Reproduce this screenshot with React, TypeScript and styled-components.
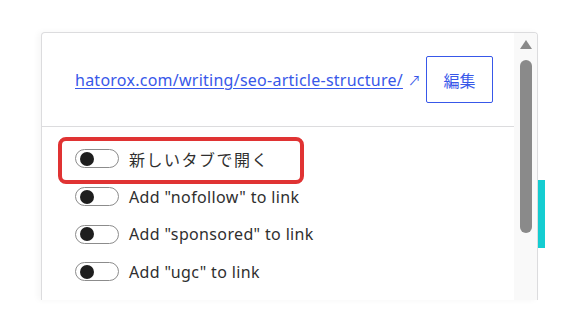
import React from "react";
import styled, { createGlobalStyle } from "styled-components";

const Global = createGlobalStyle`
  html, body { margin: 0; padding: 0; background: #ffffff; }
  body { font-family: "Noto Sans", "Noto Sans CJK JP", sans-serif; }
`;

const Stage = styled.div`
  width: 576px;
  height: 332px;
  box-sizing: border-box;
  padding: 32px 0 0 41px;
  display: flex;
  align-items: flex-start;
`;

const Panel = styled.div`
  position: relative;
  width: 497px;
  height: 268px;
  box-sizing: border-box;
  border: 1px solid #dcdcde;
  border-bottom: none;
  border-radius: 4px 4px 0 0;
  background: #fff;
  box-shadow: -3px 0 6px rgba(0, 0, 0, 0.04);
  display: flex;
  overflow: hidden;
`;

const Content = styled.div`
  flex: 1;
  display: flex;
  flex-direction: column;
`;

const LinkRow = styled.div`
  display: flex;
  align-items: center;
  padding: 23px 0 23px 33px;
  border-bottom: 1px solid #dcdcde;
`;

const LinkText = styled.a`
  font-size: 16px;
  color: #3858e9;
  text-decoration: underline;
  text-underline-offset: 2px;
  text-decoration-thickness: 1px;
  letter-spacing: 0.25px;
`;

const Arrow = styled.span`
  font-size: 13px;
  color: #3858e9;
  margin-left: 5px;
`;

const EditButton = styled.button`
  margin-left: 5px;
  width: 67px;
  height: 47px;
  box-sizing: border-box;
  border: 1px solid #3858e9;
  border-radius: 2px;
  background: #fff;
  color: #3858e9;
  font-family: "Noto Sans CJK JP", sans-serif;
  font-size: 16px;
  padding: 0;
`;

const ToggleList = styled.div`
  display: flex;
  flex-direction: column;
  padding: 13px 0 0 33px;
`;

const ToggleRow = styled.div`
  display: flex;
  align-items: center;
  height: 37.7px;
  gap: 10px;
`;

const Track = styled.span`
  width: 44px;
  height: 19px;
  box-sizing: border-box;
  border: 1px solid #8c8c8c;
  border-radius: 10px;
  display: flex;
  align-items: center;
  padding-left: 4px;
`;

const Thumb = styled.span`
  width: 14px;
  height: 14px;
  border-radius: 50%;
  background: #1e1e1e;
`;

const Label = styled.span<{ $cjk?: boolean }>`
  font-family: "Noto Sans", "Noto Sans CJK JP", sans-serif;
  font-size: 16px;
  color: #2f2f2f;
  letter-spacing: ${(p) => (p.$cjk ? "1.5px" : "0.35px")};
`;

const Scroll = styled.div`
  width: 23px;
  background: #f9f9f9;
  display: flex;
  flex-direction: column;
  align-items: center;
  padding-top: 7px;
`;

const UpArrow = styled.span`
  width: 0;
  height: 0;
  border-left: 6px solid transparent;
  border-right: 6px solid transparent;
  border-bottom: 9px solid #8a8a8a;
`;

const ScrollThumb = styled.div`
  margin-top: 11px;
  width: 12px;
  height: 173px;
  border-radius: 6px;
  background: #8a8a8a;
`;

const Highlight = styled.div`
  position: absolute;
  left: 16px;
  top: 104px;
  width: 246px;
  height: 47px;
  box-sizing: border-box;
  border: 4px solid #e03333;
  border-radius: 8px;
  pointer-events: none;
`;

const Behind = styled.div`
  width: 7px;
  height: 68px;
  margin-top: 148px;
  background: #14cdd1;
`;

const options = [
  { text: "新しいタブで開く", cjk: true },
  { text: 'Add "nofollow" to link', cjk: false },
  { text: 'Add "sponsored" to link', cjk: false },
  { text: 'Add "ugc" to link', cjk: false },
];

export default function App() {
  return (
    <>
      <Global />
      <Stage>
        <Panel>
          <Content>
            <LinkRow>
              <LinkText href="#">hatorox.com/writing/seo-article-structure/</LinkText>
              <Arrow>↗</Arrow>
              <EditButton>編集</EditButton>
            </LinkRow>
            <ToggleList>
              {options.map((o) => (
                <ToggleRow key={o.text}>
                  <Track>
                    <Thumb />
                  </Track>
                  <Label $cjk={o.cjk}>{o.text}</Label>
                </ToggleRow>
              ))}
            </ToggleList>
          </Content>
          <Scroll>
            <UpArrow />
            <ScrollThumb />
          </Scroll>
          <Highlight />
        </Panel>
        <Behind />
      </Stage>
    </>
  );
}
